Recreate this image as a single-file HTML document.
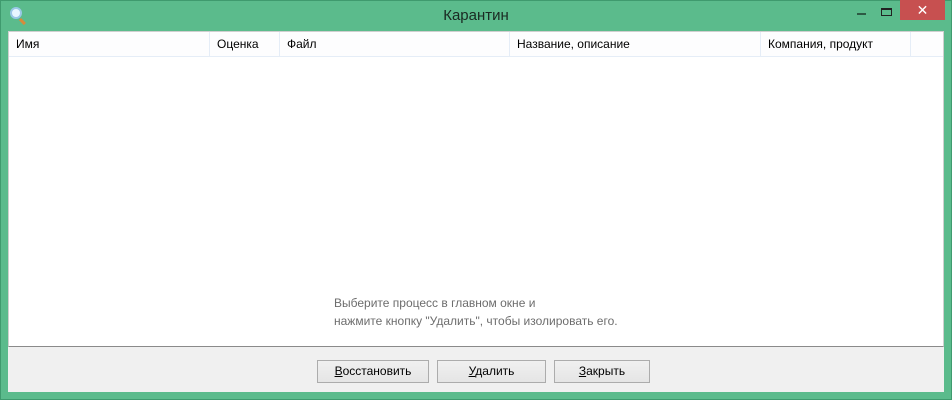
<!DOCTYPE html>
<html><head><meta charset="utf-8"><style>
*{margin:0;padding:0;box-sizing:border-box}
body{width:952px;height:400px;background:#5bbb8c;position:relative;overflow:hidden;font-family:"Liberation Sans","DejaVu Sans",sans-serif;font-size:12px;color:#000}
.frame{position:absolute;left:0;top:0;width:952px;height:400px;border:1px solid #3f9a6e}
.title{position:absolute;left:0;top:7px;width:952px;text-align:center;font-size:15px;color:#1a2a22}
.icon{position:absolute;left:10px;top:7px;width:12px;height:12px;border:2px solid #9ac8e6;border-radius:50%;background:#e8f6ff}
.icon:after{content:"";position:absolute;left:9px;top:9px;width:7px;height:3px;background:#d98a3a;transform:rotate(45deg);transform-origin:0 0}
.min{position:absolute;left:857px;top:13px;width:9px;height:2px;background:#2d5a44}
.max{position:absolute;left:881px;top:8px;width:11px;height:8px;border:1px solid #222;border-top-width:2px}
.close{position:absolute;left:900px;top:0;width:45px;height:20px;background:#c75050;color:#fff;text-align:center;font-size:14px;line-height:20px;font-weight:bold}
.client{position:absolute;left:8px;top:31px;width:936px;height:361px;background:#f0f0f0}
.list{position:absolute;left:0;top:0;width:936px;height:316px;background:#fff;border-bottom:1px solid #8a8a8a;border-left:1px solid #cfcfcf;border-right:1px solid #cfcfcf;border-top:1px solid #cfcfcf}
.hdr{position:absolute;left:0;top:0;width:934px;height:25px;border-bottom:1px solid #e5edf7;background:#fdfdfe}
.col{position:absolute;top:0;height:24px;line-height:25px;border-right:1px solid #e5edf7;padding-left:7px}
.msg{position:absolute;left:325px;top:262px;color:#6d6d6d;line-height:18px}
.btn{position:absolute;top:329px;height:23px;border:1px solid #acacac;background:linear-gradient(#f0f0f0,#e5e5e5);text-align:center;line-height:21px}
u{text-decoration:underline}
</style></head><body>
<div class="frame"></div>
<div class="icon"></div>
<div class="title">Карантин</div>
<div class="min"></div><div class="max"></div>
<div class="close">✕</div>
<div class="client">
 <div class="list">
  <div class="hdr">
   <div class="col" style="left:0;width:201px">Имя</div>
   <div class="col" style="left:201px;width:70px">Оценка</div>
   <div class="col" style="left:271px;width:230px">Файл</div>
   <div class="col" style="left:501px;width:251px">Название, описание</div>
   <div class="col" style="left:752px;width:150px">Компания, продукт</div>
  </div>
  <div class="msg">Выберите процесс в главном окне и<br>нажмите кнопку "Удалить", чтобы изолировать его.</div>
 </div>
 <div class="btn" style="left:309px;width:112px"><u>В</u>осстановить</div>
 <div class="btn" style="left:429px;width:109px"><u>У</u>далить</div>
 <div class="btn" style="left:546px;width:96px"><u>З</u>акрыть</div>
</div>
</body></html>
